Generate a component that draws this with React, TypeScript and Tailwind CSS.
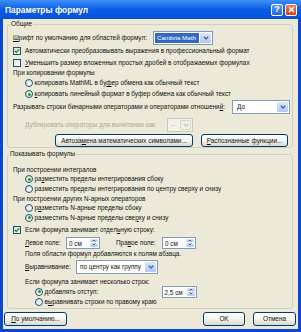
import React from "react";

function Check({ checked }: { checked?: boolean }) {
  return (
    <span className="w-[8px] h-[8px] border border-[#1c5180] bg-linear-to-br from-[#dcdcd4] to-white flex items-center justify-center shrink-0">
      {checked && (
        <svg width="6" height="6" viewBox="0 0 6 6">
          <path d="M0.7 2.8 L2.3 4.4 L5.3 1.2" stroke="#21a121" strokeWidth="1.4" fill="none" />
        </svg>
      )}
    </span>
  );
}

function Radio({ checked }: { checked?: boolean }) {
  return (
    <span className="w-[8px] h-[8px] rounded-full border border-[#1c5180] bg-linear-to-br from-[#dcdcd4] to-white flex items-center justify-center shrink-0">
      {checked && <span className="w-[3px] h-[3px] rounded-full bg-[#21a121]" />}
    </span>
  );
}

function Arrow({ disabled }: { disabled?: boolean }) {
  return (
    <span
      className={
        "w-[11px] h-full rounded-[1px] flex items-center justify-center shrink-0 " +
        (disabled ? "bg-[#f2f1ea] border border-[#d8d6c8]" : "bg-linear-to-b from-[#dbe5fc] to-[#b3c6f5]")
      }
    >
      <svg width="6" height="4" viewBox="0 0 6 4">
        <path d="M0.8 0.8 L3 3 L5.2 0.8" stroke={disabled ? "#c9c7ba" : "#4d6185"} strokeWidth="1.3" fill="none" />
      </svg>
    </span>
  );
}

function Spin({ text, w }: { text: string; w: string }) {
  return (
    <span className={"h-[12px] border border-[#7f9db9] bg-white flex items-stretch shrink-0 p-px " + w}>
      <span className="flex-1 pl-[1px] leading-[9px]">{text}</span>
      <span className="w-[8px] flex flex-col gap-px">
        <span className="flex-1 bg-linear-to-b from-[#dbe5fc] to-[#b3c6f5] rounded-[1px] flex items-center justify-center">
          <svg width="4" height="3" viewBox="0 0 4 3">
            <path d="M0.5 2.5 L2 1 L3.5 2.5" stroke="#4d6185" strokeWidth="1" fill="none" />
          </svg>
        </span>
        <span className="flex-1 bg-linear-to-b from-[#dbe5fc] to-[#b3c6f5] rounded-[1px] flex items-center justify-center">
          <svg width="4" height="3" viewBox="0 0 4 3">
            <path d="M0.5 0.5 L2 2 L3.5 0.5" stroke="#4d6185" strokeWidth="1" fill="none" />
          </svg>
        </span>
      </span>
    </span>
  );
}

function Btn({ children, w }: { children: React.ReactNode; w: string }) {
  return (
    <span
      className={
        "h-full border border-[#003c74] rounded-[3px] bg-linear-to-b from-white via-[#f5f4ee] to-[#dcd8cc] flex items-center justify-center shrink-0 " +
        w
      }
    >
      {children}
    </span>
  );
}

export default function App() {
  return (
    <div className="w-[301px] h-[332px] bg-[#0a48d2] flex flex-col overflow-hidden font-['Liberation_Sans',Arial,sans-serif] text-[6.4px] leading-[10px] text-[#111] whitespace-nowrap">
      {/* Title bar */}
      <div className="h-[19px] shrink-0 bg-linear-to-b from-[#3d8ff7] via-[#0a5ce6] to-[#0850d8] flex items-center pl-[5px] pr-[4px] gap-[2px]">
        <span className="flex-1 text-white text-[8.4px] font-bold leading-[12px]">Параметры формул</span>
        <span className="w-[12px] h-[12px] rounded-[2px] border border-white bg-linear-to-b from-[#5d97f5] to-[#2563e0] flex items-center justify-center text-white text-[9px] font-bold leading-none">
          ?
        </span>
        <span className="w-[12px] h-[12px] rounded-[2px] border border-white bg-linear-to-b from-[#ec7a5a] to-[#d2411b] flex items-center justify-center">
          <svg width="7" height="7" viewBox="0 0 7 7">
            <path d="M1 1 L6 6 M6 1 L1 6" stroke="white" strokeWidth="1.5" />
          </svg>
        </span>
      </div>

      {/* Body */}
      <div className="flex-1 mx-[3px] mb-[3px] bg-[#ece9d8] flex flex-col">
        {/* Group 1 */}
        <fieldset className="ml-[4px] mr-[5px] border border-[#d0d0bf] rounded-[3px] pl-[5px] pr-[2px] flex flex-col">
          <legend className="-ml-[3px] px-[1px] h-[10px] leading-[10px]">Общие</legend>
          <div className="mt-[2px] h-[14px] flex items-center">
            <span className="w-[140px] shrink-0">
              <u>Ш</u>рифт по умолчанию для областей формул:
            </span>
            <span className="w-[60px] h-[14px] border border-[#7f9db9] bg-white flex p-px">
              <span className="flex-1 bg-[#316ac5] text-white pl-[2px] leading-[10px] mr-px text-[6.2px] overflow-hidden">
                Cambria Math
              </span>
              <Arrow />
            </span>
          </div>
          <div className="mt-[1px] h-[10px] flex items-center gap-[4px]">
            <Check checked />
            <span>Автоматически преобразовывать выражения в профессиональный формат</span>
          </div>
          <div className="mt-[2px] h-[10px] flex items-center gap-[4px]">
            <Check />
            <span>
              <u>У</u>меньшить размер вложенных простых дробей в отображаемых формулах
            </span>
          </div>
          <div className="h-[10px] flex items-center">При копировании формулы</div>
          <div className="h-[10px] flex items-center gap-[1.5px] pl-[12px]">
            <Radio />
            <span>
              копировать MathML в бу<u>ф</u>ер обмена как обычный текст
            </span>
          </div>
          <div className="mt-[1px] h-[10px] flex items-center gap-[1.5px] pl-[12px]">
            <Radio checked />
            <span>
              <u>к</u>опировать линейный формат в буфер обмена как обычный текст
            </span>
          </div>
          <div className="mt-[1px] h-[14px] flex items-center">
            <span className="flex-1">
              Разрывать строки бинарными операторами и операторами отношени<u>й</u>:
            </span>
            <span className="w-[58px] h-[14px] border border-[#7f9db9] bg-white flex p-px">
              <span className="flex-1 pl-[3px] leading-[10px]">До</span>
              <Arrow />
            </span>
          </div>
          <div className="mt-[4px] h-[14px] flex items-center pl-[12px]">
            <span className="w-[142px] shrink-0 text-[#aca899]">Дублировать операторы для вычитания как:</span>
            <span className="w-[26px] h-[14px] border border-[#c9c7ba] bg-[#f2f1ea] flex p-px">
              <span className="flex-1 pl-[2px] leading-[10px] text-[#aca899]">--</span>
              <Arrow disabled />
            </span>
          </div>
          <div className="mt-[2px] h-[13px] flex items-center pl-[42px] gap-[8px]">
            <Btn w="w-[138px]">
              <span>
                Автоза<u>м</u>ена математических символами...
              </span>
            </Btn>
            <Btn w="w-[87px]">
              <span>
                <u>Р</u>аспознанные функции...
              </span>
            </Btn>
          </div>
        </fieldset>

        {/* Group 2 */}
        <fieldset className="ml-[4px] mr-[5px] border border-[#d0d0bf] rounded-[3px] pl-[5px] pr-[2px] pb-px flex flex-col">
          <legend className="-ml-[4px] px-[1px] h-[12px] leading-[12px]">Показывать формулы</legend>
          <div className="mt-[5px] h-[9.6px] flex items-center">При построении интегралов</div>
          <div className="h-[9.6px] flex items-center gap-[1.5px] pl-[12px]">
            <Radio checked />
            <span>
              ра<u>з</u>местить пределы интегрирования сбоку
            </span>
          </div>
          <div className="h-[9.6px] flex items-center gap-[1.5px] pl-[12px]">
            <Radio />
            <span>разместить пределы интегрирования по центру сверху и снизу</span>
          </div>
          <div className="h-[9.6px] flex items-center">При построении других N-арных операторов</div>
          <div className="h-[9.6px] flex items-center gap-[1.5px] pl-[12px]">
            <Radio />
            <span>
              р<u>а</u>зместить N-арные пределы сбоку
            </span>
          </div>
          <div className="h-[9.6px] flex items-center gap-[1.5px] pl-[12px]">
            <Radio checked />
            <span>
              разместить N-арные пределы све<u>р</u>ху и снизу
            </span>
          </div>
          <div className="mt-[2px] h-[10px] flex items-center gap-[4px]">
            <Check checked />
            <span>
              Если формула занимает отдел<u>ь</u>ную строку:
            </span>
          </div>
          <div className="mt-[2px] h-[12px] flex items-center pl-[12px]">
            <span className="w-[41px] shrink-0">
              <u>Л</u>евое поле:
            </span>
            <Spin text="0 см" w="w-[34px]" />
            <span className="w-[46px] shrink-0 ml-[16px]">
              Пра<u>в</u>ое поле:
            </span>
            <Spin text="0 см" w="w-[34px]" />
          </div>
          <div className="h-[10px] flex items-center pl-[12px]">Поля области формул добавляются к полям абзаца.</div>
          <div className="mt-[1px] h-[14px] flex items-center pl-[12px]">
            <span className="w-[51px] shrink-0">
              <u>В</u>ыравнивание:
            </span>
            <span className="w-[82px] h-[14px] border border-[#7f9db9] bg-white flex p-px">
              <span className="flex-1 pl-[2px] leading-[10px]">по центру как группу</span>
              <Arrow />
            </span>
          </div>
          <div className="mt-[3px] h-[10px] flex items-center pl-[12px]">Если формула занимает несколько строк:</div>
          <div className="h-[10px] flex items-center pl-[22px]">
            <Radio checked />
            <span className="w-[117px] shrink-0 ml-[1.5px]">
              <u>д</u>обавлять отступ:
            </span>
            <Spin text="2,5 см" w="w-[35px]" />
          </div>
          <div className="h-[10px] flex items-center gap-[1.5px] pl-[22px]">
            <Radio />
            <span>
              в<u>ы</u>равнивать строки по правому краю
            </span>
          </div>
        </fieldset>

        {/* Bottom buttons */}
        <div className="mt-[3.5px] h-[14px] flex items-center pl-[1px] pr-[2px]">
          <Btn w="w-[63px]">
            <span>
              <u>П</u>о умолчанию...
            </span>
          </Btn>
          <span className="flex-1" />
          <Btn w="w-[42px]">
            <span>OK</span>
          </Btn>
          <span className="w-[8px]" />
          <Btn w="w-[43px]">
            <span>Отмена</span>
          </Btn>
        </div>
      </div>
    </div>
  );
}
